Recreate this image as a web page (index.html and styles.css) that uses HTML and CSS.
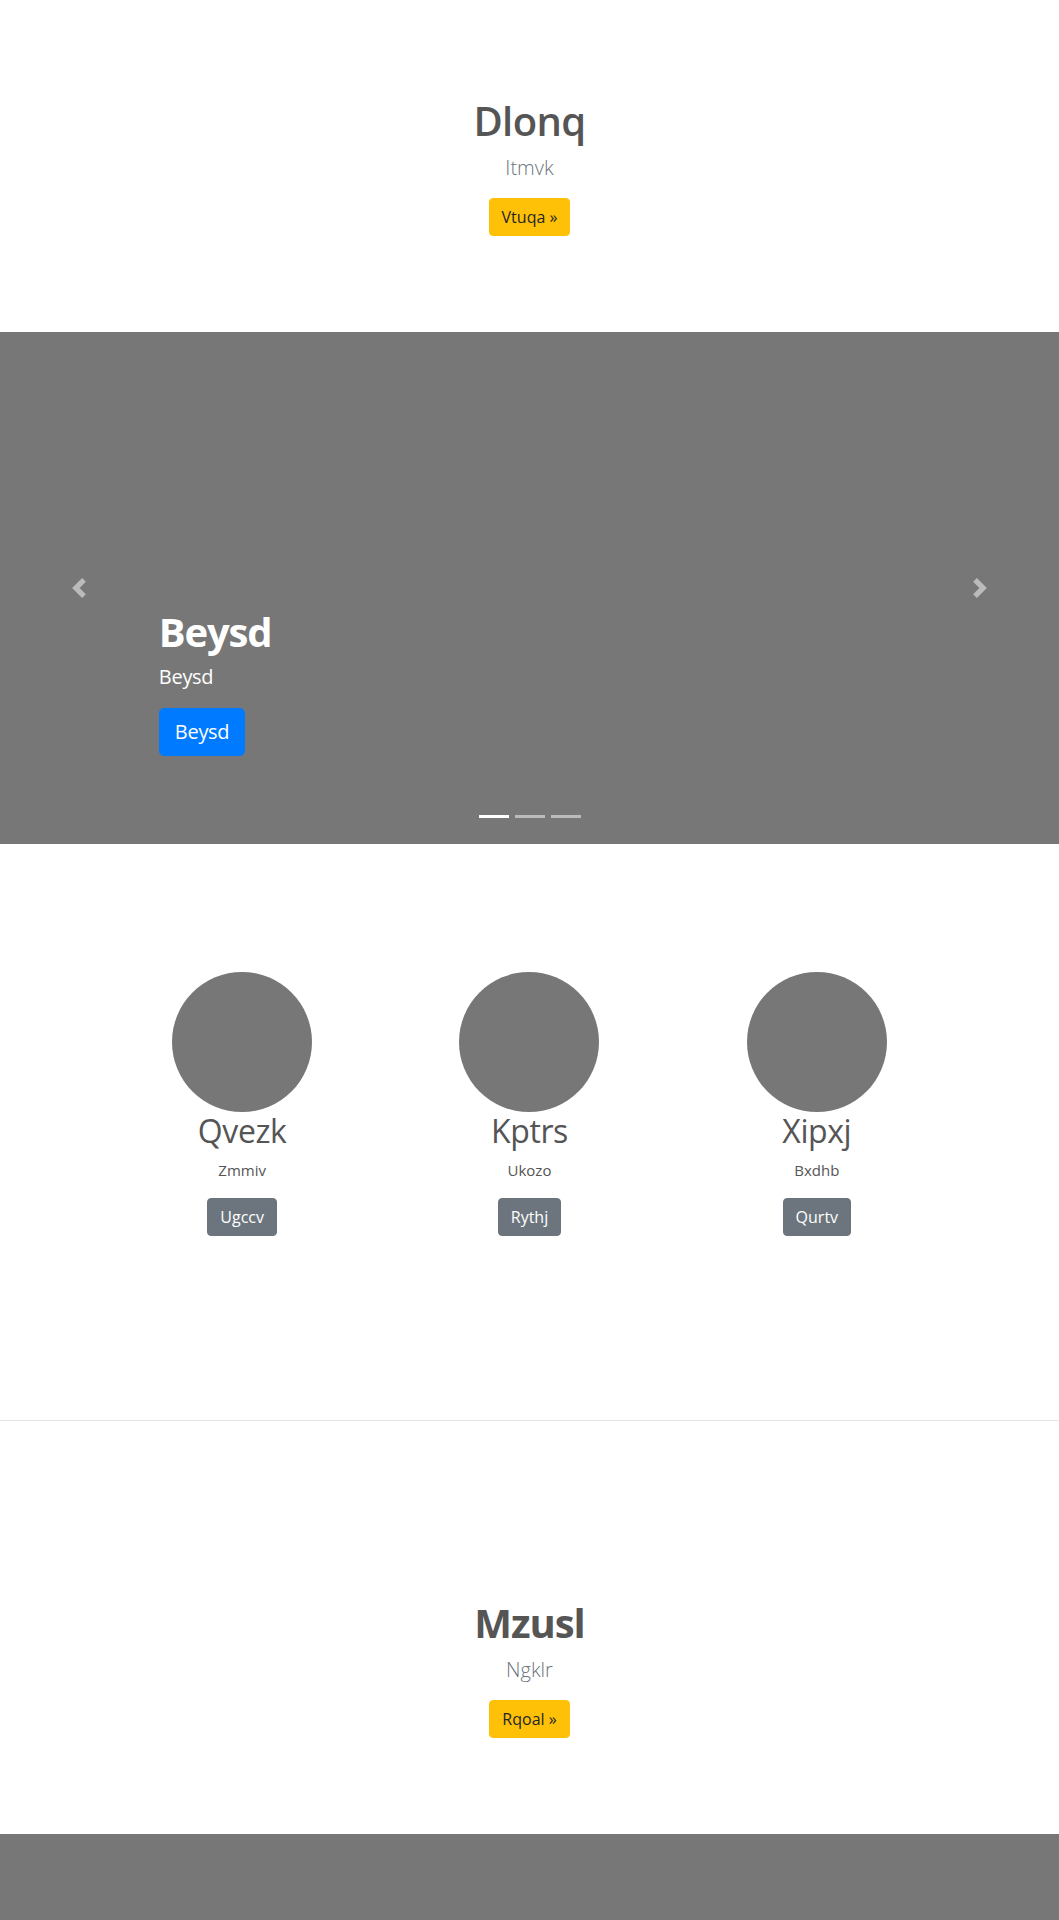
FILE: index.html
```html
<!DOCTYPE html>
<html lang="en">
<head>
<meta charset="utf-8">
<title>Carousel</title>
<link rel="stylesheet" href="styles.css">
</head>
<body>
<section class="hero hero-top">
  <h1 class="hero-title">Dlonq</h1>
  <p class="lead">Itmvk</p>
  <a class="btn btn-warning" href="#">Vtuqa &raquo;</a>
</section>

<section class="carousel">
  <a class="carousel-control prev" href="#" aria-label="Previous">
    <svg viewBox="0 0 8 8" width="20" height="20"><path d="M5.25 0l-4 4 4 4 1.5-1.5L4.25 4l2.5-2.5L5.25 0z"/></svg>
  </a>
  <a class="carousel-control next" href="#" aria-label="Next">
    <svg viewBox="0 0 8 8" width="20" height="20"><path d="M2.75 0l-1.5 1.5L3.75 4l-2.5 2.5L2.75 8l4-4-4-4z"/></svg>
  </a>
  <div class="carousel-caption">
    <h1 class="caption-title">Beysd</h1>
    <p class="caption-text">Beysd</p>
    <a class="btn btn-lg btn-primary" href="#">Beysd</a>
  </div>
  <ol class="carousel-indicators">
    <li class="active"></li>
    <li></li>
    <li></li>
  </ol>
</section>

<section class="marketing">
  <div class="marketing-row">
    <div class="feature">
      <div class="circle"></div>
      <h2 class="feature-title">Qvezk</h2>
      <p class="feature-text">Zmmiv</p>
      <a class="btn btn-secondary" href="#">Ugccv</a>
    </div>
    <div class="feature">
      <div class="circle"></div>
      <h2 class="feature-title">Kptrs</h2>
      <p class="feature-text">Ukozo</p>
      <a class="btn btn-secondary" href="#">Rythj</a>
    </div>
    <div class="feature">
      <div class="circle"></div>
      <h2 class="feature-title">Xipxj</h2>
      <p class="feature-text">Bxdhb</p>
      <a class="btn btn-secondary" href="#">Qurtv</a>
    </div>
  </div>
</section>

<hr class="divider">

<section class="hero hero-bottom">
  <h1 class="hero-title bold">Mzusl</h1>
  <p class="lead">Ngklr</p>
  <a class="btn btn-warning" href="#">Rqoal &raquo;</a>
</section>

<footer class="footer"></footer>
</body>
</html>
```

FILE: styles.css
```css
* { box-sizing: border-box; }

body {
  margin: 0;
  font-family: "Open Sans", "Noto Sans", "Liberation Sans", sans-serif;
  font-size: 16px;
  line-height: 1.5;
  color: #212529;
  background: #fff;
}

.hero {
  display: flex;
  flex-direction: column;
  align-items: center;
  text-align: center;
}

.hero-top {
  padding: 97px 0 96px;
}

.hero-bottom {
  padding: 178px 0 96px;
}

.hero-title {
  margin: 0 0 8px;
  font-size: 40px;
  line-height: 48px;
  font-weight: 600;
  letter-spacing: -0.6px;
  color: #555;
}

.hero-title.bold {
  font-weight: 700;
  letter-spacing: -1px;
}

.lead {
  margin: 0 0 15px;
  font-size: 20px;
  line-height: 30px;
  font-weight: 300;
  color: #6c757d;
}

.btn {
  display: inline-block;
  padding: 6px 12px;
  font-size: 16px;
  line-height: 24px;
  border: 1px solid transparent;
  border-radius: 4px;
  text-decoration: none;
  white-space: nowrap;
}

.btn-warning {
  background: #ffc107;
  border-color: #ffc107;
  color: #212529;
}

.btn-secondary {
  background: #6c757d;
  border-color: #6c757d;
  color: #fff;
}

.btn-primary {
  background: #007bff;
  border-color: #007bff;
  color: #fff;
}

.btn-lg {
  padding: 8px 15px;
  font-size: 20px;
  line-height: 30px;
  border-radius: 5px;
  letter-spacing: -0.3px;
}

/* Carousel */
.carousel {
  position: relative;
  height: 512px;
  background: #777;
  overflow: hidden;
}

.carousel-control {
  position: absolute;
  top: 0;
  bottom: 0;
  width: 15%;
  display: flex;
  align-items: center;
  justify-content: center;
  fill: #fff;
  opacity: 0.5;
}

.carousel-control.prev { left: 0; }
.carousel-control.next { right: 0; }

.carousel-control svg { display: block; }

.carousel-caption {
  position: absolute;
  left: 15%;
  right: 15%;
  bottom: 48px;
  padding: 20px 0 40px;
  color: #fff;
  display: flex;
  flex-direction: column;
  align-items: flex-start;
}

.caption-title {
  margin: 0 0 6px;
  font-size: 40px;
  line-height: 48px;
  font-weight: 700;
  letter-spacing: -1.2px;
}

.caption-text {
  margin: 0 0 16px;
  font-size: 20px;
  line-height: 30px;
  font-weight: 400;
  letter-spacing: -0.3px;
}

.carousel-indicators {
  position: absolute;
  left: 0;
  right: 0;
  bottom: 26px;
  margin: 0;
  padding: 0;
  list-style: none;
  display: flex;
  justify-content: center;
  gap: 6px;
}

.carousel-indicators li {
  width: 30px;
  height: 3px;
  background: #fff;
  opacity: 0.5;
}

.carousel-indicators li.active {
  opacity: 1;
}

/* Marketing */
.marketing {
  padding: 128px 0 0;
}

.marketing-row {
  width: 862px;
  margin: 0 auto;
  display: grid;
  grid-template-columns: repeat(3, 1fr);
}

.feature {
  display: flex;
  flex-direction: column;
  align-items: center;
  text-align: center;
}

.circle {
  width: 140px;
  height: 140px;
  border-radius: 50%;
  background: #777;
}

.feature-title {
  margin: 0 0 8px;
  font-size: 32px;
  line-height: 38px;
  font-weight: 400;
  letter-spacing: -0.4px;
  color: #555;
}

.feature-text {
  margin: 0 0 16px;
  font-size: 15px;
  line-height: 24px;
  color: #555;
}

.divider {
  margin: 184px 0 0;
  border: 0;
  border-top: 1px solid #e5e5e5;
  height: 0;
}

.footer {
  height: 120px;
  background: #777;
}
```
